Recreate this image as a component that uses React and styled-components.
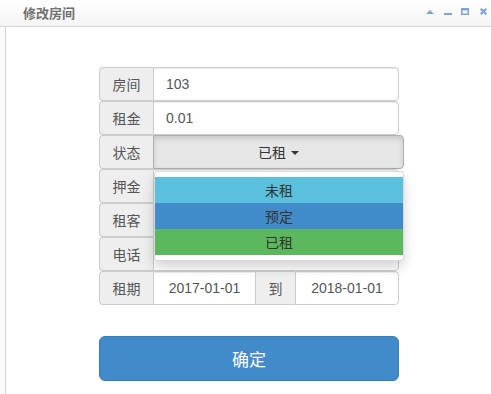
import React from "react";
import styled, { createGlobalStyle } from "styled-components";

const GlobalStyle = createGlobalStyle`
  html, body {
    margin: 0;
    padding: 0;
    background: #fbfbfb;
    font-family: "Liberation Sans", "Noto Sans CJK SC", sans-serif;
  }
  * { box-sizing: border-box; }
`;

const Window = styled.div`
  width: 491px;
  height: 394px;
  overflow: hidden;
  display: flex;
  flex-direction: column;
`;

const TitleBar = styled.div`
  height: 27px;
  flex-shrink: 0;
  display: flex;
  align-items: stretch;
  justify-content: space-between;
  padding: 0 0 0 23px;
  background: linear-gradient(to bottom, #ffffff 0%, #f4f4f4 100%);
  border-bottom: 1px solid #d4d4d4;
`;

const Title = styled.span`
  display: flex;
  align-items: center;
  padding-bottom: 1px;
  font-family: "Noto Sans CJK SC", sans-serif;
  font-size: 13px;
  font-weight: 700;
  color: #707070;
`;

const Tools = styled.div`
  display: flex;
`;

const ToolIcon = styled.svg`
  width: 18px;
  height: 26px;
  fill: #7fa3d6;
`;

const Body = styled.div`
  flex: 1;
  margin-left: 5px;
  border-left: 1px solid #d4d4d4;
  background: #fff;
  padding: 40px 0 0 93px;
`;

const Form = styled.div`
  width: 300px;
  display: flex;
  flex-direction: column;
  position: relative;
`;

const Group = styled.div`
  display: flex;
  height: 34px;
  font-size: 14px;
`;

const Addon = styled.div`
  width: ${(p) => p.$w || 54}px;
  flex-shrink: 0;
  display: flex;
  align-items: center;
  justify-content: center;
  background: #eee;
  border: 1px solid #ccc;
  border-radius: ${(p) => (p.$mid ? "0" : "4px 0 0 4px")};
  border-right: none;
  color: #555;
  font-family: "Noto Sans CJK SC", sans-serif;
`;

const Field = styled.div`
  flex: ${(p) => (p.$w ? `0 0 ${p.$w}px` : "1")};
  display: flex;
  align-items: center;
  padding: 0 12px;
  border: 1px solid #ccc;
  border-radius: ${(p) => (p.$mid ? "0" : "0 4px 4px 0")};
  ${(p) => (p.$mid ? "border-right: none;" : "")}
  color: #555;
  background: #fff;
  box-shadow: inset 0 1px 1px rgba(0, 0, 0, 0.075);
  justify-content: ${(p) => (p.$center ? "center" : "flex-start")};
`;

const Toggle = styled.div`
  flex: 0 0 251px;
  display: flex;
  align-items: center;
  justify-content: center;
  gap: 5px;
  background: #e6e6e6;
  border: 1px solid #adadad;
  border-radius: 0 4px 4px 0;
  box-shadow: inset 0 3px 5px rgba(0, 0, 0, 0.125);
  color: #333;
  font-family: "Noto Sans CJK SC", sans-serif;
`;

const Caret = styled.span`
  width: 0;
  height: 0;
  border-top: 4px solid #333;
  border-left: 4px solid transparent;
  border-right: 4px solid transparent;
  margin-top: 1px;
`;

const Menu = styled.div`
  position: absolute;
  top: 104px;
  left: 55px;
  width: 250px;
  padding: 5px 0;
  background: #fff;
  border: 1px solid rgba(0, 0, 0, 0.15);
  border-radius: 4px;
  box-shadow: 0 6px 12px rgba(0, 0, 0, 0.175);
  z-index: 2;
`;

const MenuItem = styled.div`
  height: 26px;
  display: flex;
  align-items: center;
  justify-content: center;
  background: ${(p) => p.$bg};
  color: #333;
  font-size: 14px;
  font-family: "Noto Sans CJK SC", sans-serif;
`;

const Submit = styled.button`
  margin-top: 31px;
  width: 300px;
  height: 45px;
  background: #428bca;
  border: 1px solid #357ebd;
  border-radius: 6px;
  color: #fff;
  font-size: 17px;
  font-family: "Noto Sans CJK SC", sans-serif;
  cursor: pointer;
`;

const fields = [
  { label: "房间", value: "103" },
  { label: "租金", value: "0.01" },
];

const after = ["押金", "租客", "电话"];

const options = [
  { text: "未租", bg: "#5bc0de" },
  { text: "预定", bg: "#428bca" },
  { text: "已租", bg: "#5cb85c" },
];

export default function App() {
  return (
    <Window>
      <GlobalStyle />
      <TitleBar>
        <Title>修改房间</Title>
        <Tools>
          <ToolIcon viewBox="0 0 18 26">
            <polygon points="7,14 11,10 15,14" />
          </ToolIcon>
          <ToolIcon viewBox="0 0 18 26">
            <rect x="7" y="13" width="8" height="2" />
          </ToolIcon>
          <ToolIcon viewBox="0 0 18 26">
            <path d="M6 8h8v7H6z M7.5 10.5v3h5v-3z" fillRule="evenodd" />
          </ToolIcon>
          <ToolIcon viewBox="0 0 18 26">
            <path d="M7 9.5L8.5 8 10.5 10 12.5 8 14 9.5 12 11.5 14 13.5 12.5 15 10.5 13 8.5 15 7 13.5 9 11.5z" />
          </ToolIcon>
        </Tools>
      </TitleBar>
      <Body>
        <Form>
          {fields.map((f) => (
            <Group key={f.label}>
              <Addon>{f.label}</Addon>
              <Field>{f.value}</Field>
            </Group>
          ))}
          <Group>
            <Addon>状态</Addon>
            <Toggle>
              已租 <Caret />
            </Toggle>
          </Group>
          <Menu>
            {options.map((o) => (
              <MenuItem key={o.text} $bg={o.bg}>
                {o.text}
              </MenuItem>
            ))}
          </Menu>
          {after.map((l) => (
            <Group key={l}>
              <Addon>{l}</Addon>
              <Field />
            </Group>
          ))}
          <Group>
            <Addon>租期</Addon>
            <Field $mid $w={102} $center>
              2017-01-01
            </Field>
            <Addon $mid $w={40}>
              到
            </Addon>
            <Field $center>2018-01-01</Field>
          </Group>
          <Submit>确定</Submit>
        </Form>
      </Body>
    </Window>
  );
}
